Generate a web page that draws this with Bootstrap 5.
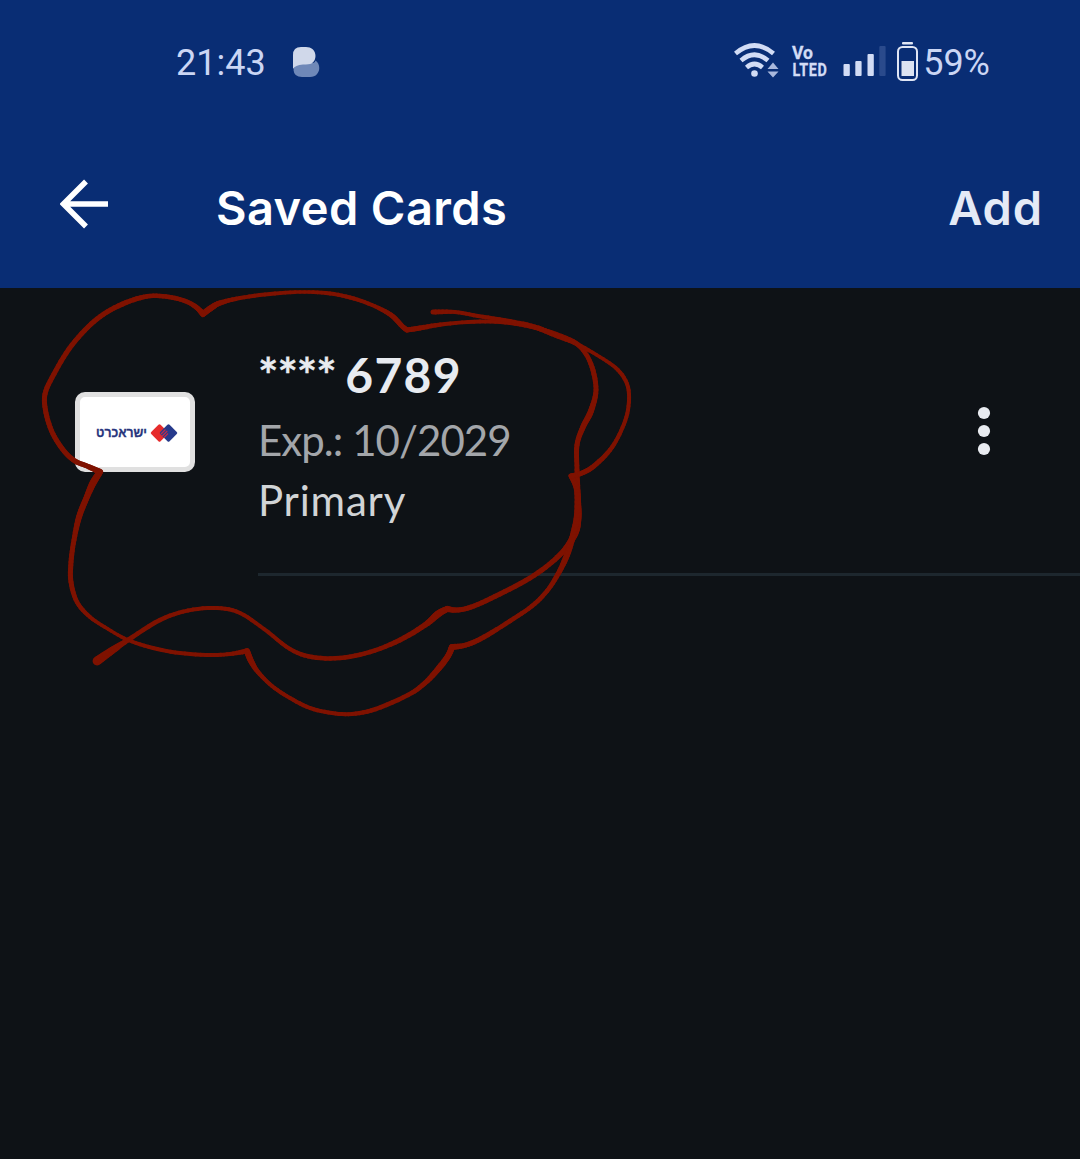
<!DOCTYPE html>
<html lang="en">
<head>
<meta charset="utf-8">
<meta name="viewport" content="width=device-width, initial-scale=1">
<title>Saved Cards</title>
<link rel="stylesheet" href="https://cdn.jsdelivr.net/npm/bootstrap@5.3.0/dist/css/bootstrap.min.css">
<style>
body{background:#0e1216;color:#e8ebf0;font-family:Lato,"Open Sans",sans-serif;height:1159px;overflow:hidden}
.app-head{background:#092d74;height:288px}
.status-bar{height:126px;padding:0 90px 0 176px;font:400 36px/1 Roboto,sans-serif;color:#cbd6f4}
.title-bar{height:162px;padding:2px 37px 0 60px}
.title-bar h1,.add-link{font-family:Inter,Lato,sans-serif;font-weight:600;font-size:47px;line-height:60px;margin:0}
.title-bar h1{margin-left:107px;color:#fff;letter-spacing:.4px}
.add-link{color:#e4eaf6;text-decoration:none;letter-spacing:.9px}
.back-icon{margin-bottom:8px}
.card-row{height:288px;padding-left:75px}
.brand-tile{width:120px;height:80px;border:5px solid #e0e0e0;border-radius:10px;background:#fff;margin-top:104px;padding:2px 0 0 4px}
.card-info{margin-left:63px;border-bottom:3px solid #1d272e;padding-top:57px}
.num{font-weight:700;font-size:48px;line-height:60px}
.stars{letter-spacing:-1px;-webkit-text-stroke:.3px #e8ebf0}
.digits{letter-spacing:1.3px;margin-left:-2px}
.exp,.prim{font-size:42px;line-height:60px;white-space:nowrap}
.exp{color:#a3a6aa;margin-top:5px;letter-spacing:-.95px}
.prim{color:#d1d4d6;letter-spacing:.8px}
.more-btn{margin:61px 88px 0 0}
.marker{left:0;top:0;pointer-events:none}
.app-badge{margin:0 0 2px 27px}
.radio-icons{margin:0 0 2px 0}
.batt-pct{margin-left:5px}
</style>
<script src="https://cdn.jsdelivr.net/npm/bootstrap@5.3.0/dist/js/bootstrap.bundle.min.js"></script>
</head>
<body class="position-relative">
<header class="app-head">
  <div class="status-bar d-flex align-items-center">
    <span>21:43</span>
    <svg class="app-badge" width="27" height="31" viewBox="0 0 27 31"><path d="M9 16H20Q22.500 15 22.500 13.500C29 18 27 30 17 30H9Q1 30 0.500 23Q1 16 9 16Z" fill="#6f88b8"/><path d="M0 22V8Q0 0 8 0H13C24 0 25 13 18.500 16.500Q16 17.500 10 17.500Q2 18 0 22Z" fill="#d0d8ea"/></svg>
    <div class="radio-icons ms-auto d-flex">
    <svg width="186" height="42" viewBox="732 41 186 42">
      <g fill="none" stroke="#d2dcf5" stroke-width="4.600"><path d="M735.500 53.500Q754.500 37.500 773.500 53.500"/><path d="M741 60.500Q754.500 49 768 60.500"/><path d="M746.500 67.500Q754.500 60.500 762.500 67.500"/></g>
      <circle cx="754.500" cy="73.500" r="3.300" fill="#d2dcf5"/>
      <path d="M767.500 69L773 62.500L778.500 69ZM767.500 71.500H778.500L773 77.500Z" fill="#a9b8dc"/>
      <g fill="#d2dcf5" stroke="#d2dcf5" stroke-width=".3" font-family="Roboto,sans-serif" font-weight="700"><text x="792" y="59" font-size="17.500" textLength="21" lengthAdjust="spacingAndGlyphs">Vo</text><text x="792.500" y="76" font-size="18.500" textLength="35" lengthAdjust="spacingAndGlyphs" letter-spacing=".8">LTED</text></g>
      <g fill="#d2dcf5"><rect x="843.500" y="64" width="6.300" height="12" rx="1"/><rect x="855.300" y="61" width="6.300" height="15" rx="1"/><rect x="867.500" y="54" width="6.300" height="22" rx="1"/><rect x="879.300" y="46" width="6.300" height="30" rx="1" fill="#2a4a8c"/></g>
      <rect x="902" y="42" width="11" height="2.600" rx="1" fill="#e0e6f5"/><rect x="898" y="47" width="19" height="33" rx="4.500" fill="none" stroke="#e0e6f5" stroke-width="2"/><rect x="901.500" y="61" width="12.500" height="15" fill="#dce3f2"/>
    </svg></div>
    <span class="batt-pct">59%</span>
  </div>
  <nav class="title-bar d-flex align-items-center">
    <svg class="back-icon" width="49" height="50" viewBox="0 0 49 50"><path d="M48 25H4M26 2.500L3.500 25L26 47.500" fill="none" stroke="#fff" stroke-width="5.500"/></svg>
    <h1>Saved Cards</h1>
    <a class="add-link ms-auto" href="#">Add</a>
  </nav>
</header>
<main>
  <section class="card-row d-flex align-items-stretch">
    <div class="brand-tile d-flex align-items-center justify-content-center flex-shrink-0">
      <svg width="84" height="22" viewBox="0 0 84 22"><text x="1" y="14.800" direction="rtl" text-anchor="end" font-family="'Liberation Sans','DejaVu Sans',sans-serif" font-weight="700" font-size="13" textLength="51" lengthAdjust="spacingAndGlyphs" fill="#26347c" stroke="#26347c" stroke-width=".3">ישראכרט</text><rect x="-6.600" y="-6.600" width="13.200" height="13.200" rx="1.500" transform="translate(64.500 11) rotate(45)" fill="#e62b2b"/><rect x="-6.600" y="-6.600" width="13.200" height="13.200" rx="1.500" transform="translate(73.500 11) rotate(45)" fill="#263a8c"/><path d="M66 12L70.500 7.500M67.300 14L72.300 9M69 15.500L73 11.500" stroke="#c52b45" stroke-width="1.100"/></svg>
    </div>
    <div class="card-info flex-grow-1 d-flex justify-content-between">
      <div>
        <div class="num"><span class="stars">****</span> <span class="digits">6789</span></div>
        <div class="exp">Exp.: 10/2029</div>
        <div class="prim">Primary</div>
      </div>
      <svg class="more-btn" width="16" height="50" viewBox="0 0 16 50" fill="#e8ebf0"><circle cx="8" cy="7" r="6.100"/><circle cx="8" cy="25" r="6.100"/><circle cx="8" cy="43" r="6.100"/></svg>
    </div>
  </section>
</main>
<svg class="marker position-absolute" width="1080" height="1159" viewBox="0 0 1080 1159"><g id="ink" fill="none" stroke="#7f1200" stroke-linecap="round"></g></svg>
<script>
// Pen strokes: each run is smooth, each point is [x, y, nib width]
const runs=[
 [[97,661,9],[112,650.500,7.500],[128,640,5],[160,620,4.5],[188,610.500,4],[217,608,4],[240,613,4],[264,629,4],[290,649,4],[312,657,4.500],[340,658,4.500],[370,652,4.500],[400,640,5],[425,625,5.500],[438,614,7],[447,609,6]],
 [[447,609,6],[458,610,5],[474,606,5],[500,594,5],[530,578,5],[552,562,5],[566,548,5.500],[575,533,7],[578,518,7],[578,500,6],[577,470,5],[577,445,5],[583,427,5.500],[591,411,6],[596,390,5],[592,367,5],[583,350,4.500],[570,340,5],[540,329,4.500],[510,323,4],[480,321.500,4],[445,324,4],[420,328,5],[407,330,5]],
 [[407,330,5],[402,326,5],[391,315,5],[372,305,4],[350,297.500,4],[326,293,4],[300,292,3.500],[270,294,4],[240,298,4],[220,303,5],[211,308,6],[203,314,6]],
 [[203,314,6],[196,307,5],[185,301,4.500],[169,297,4.500],[150,296,4.500],[130,301,5],[107,312,5],[88,327,5],[69,349,5],[54,374,5],[45,394,5],[46,413,5],[53,434,5],[64,451,5],[75,461,5],[87,466,5],[100,472,6]],
 [[100,472,6],[93,483,7],[86,499,6],[79,517,6],[74,540,5],[71,562,5],[71,582,5],[77,602,4.500],[90,617,4],[108,629,3.500],[128,640,3.500],[153,648,4],[180,653,4],[210,655,4],[230,654,4],[247,651,5]],
 [[247,651,6],[251,661,6],[258,672,4.500],[272,686,4],[290,698,4],[310,708,4],[332,713,4],[352,714,4],[376,709,4.500],[408,695,4.500],[425,683,5],[439,668,6],[448,656,6],[452,647,6]],
 [[452,647,6],[466,645,5],[484,637,5],[510,621,4.500],[532,606,4.500],[547,591,4.500],[558,574,5],[567,555,6],[573,535,6],[577,515,6],[577,490,6],[571,476,5]],
 [[571,476,5],[582,473,5],[594,466,5],[610,450,4.500],[621,431,4],[628,410,4],[628,387,4],[618,370,4],[600,357,3.500],[577,344,4],[555,335,5],[535,327,5],[510,321,4],[478,316,4],[455,312,4],[433,312,5]]
];
let out='';
for(const p of runs)for(let i=0;i<p.length-1;i++){
 const a=p[i-1]||p[i],b=p[i],c=p[i+1],d=p[i+2]||c;let q=b;
 for(let s=1;s<=6;s++){const t=s/6,r=[0,1,2].map(k=>.5*(2*b[k]+(c[k]-a[k])*t+(2*a[k]-5*b[k]+4*c[k]-d[k])*t*t+(3*b[k]-a[k]-3*c[k]+d[k])*t*t*t));
  out+=`<path d="M${q[0].toFixed(1)} ${q[1].toFixed(1)}L${r[0].toFixed(1)} ${r[1].toFixed(1)}" stroke-width="${r[2].toFixed(1)}"/>`;q=r}
}
document.getElementById('ink').innerHTML=out;
</script>
</body>
</html>
